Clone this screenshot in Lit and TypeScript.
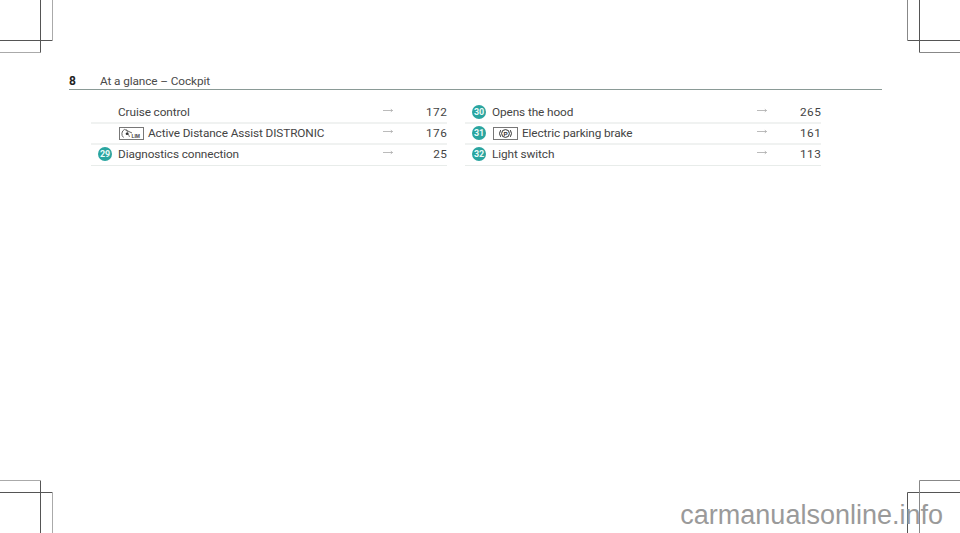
import { LitElement, html, css, svg } from "lit";
import { customElement } from "lit/decorators.js";

type Row = { badge?: string; icon?: "lim" | "park"; text: string; page: string };

const LEFT: Row[] = [
  { text: "Cruise control", page: "172" },
  { icon: "lim", text: "Active Distance Assist DISTRONIC", page: "176" },
  { badge: "29", text: "Diagnostics connection", page: "25" },
];
const RIGHT: Row[] = [
  { badge: "30", text: "Opens the hood", page: "265" },
  { badge: "31", icon: "park", text: "Electric parking brake", page: "161" },
  { badge: "32", text: "Light switch", page: "113" },
];

const LIM = svg`<svg class="ico" width="25" height="13" viewBox="0 0 25 13">
  <rect x="0.5" y="0.5" width="24" height="12" fill="#fff" stroke="#777"/>
  <path d="M4.5 10.5 A5 5 0 0 1 5.5 2.4 L13 6" fill="none" stroke="#555" stroke-width="0.9"/>
  <path d="M7.5 2.4 L10.5 10" fill="none" stroke="#666" stroke-width="0.8"/>
  <circle cx="8" cy="6.8" r="1.3" fill="#333"/>
  <text x="12.5" y="10.8" font-size="5" font-weight="700" fill="#444" font-family="Liberation Sans, sans-serif">LIM</text>
</svg>`;

const PARK = svg`<svg class="ico" width="25" height="13" viewBox="0 0 25 13">
  <rect x="0.5" y="0.5" width="24" height="12" fill="#fff" stroke="#777"/>
  <circle cx="12.5" cy="6.5" r="3.9" fill="none" stroke="#333" stroke-width="1"/>
  <path d="M7.6 3.2 A6 6 0 0 0 7.6 9.8 M17.4 3.2 A6 6 0 0 1 17.4 9.8" fill="none" stroke="#333" stroke-width="1"/>
  <text x="12.5" y="8.7" text-anchor="middle" font-size="6.2" font-weight="700" fill="#333" font-family="Liberation Sans, sans-serif">P</text>
</svg>`;

const ARROW = svg`<svg class="arrow" width="10" height="5" viewBox="0 0 10 5">
  <path d="M0 2.5H9.5M7.8 1.2L9.5 2.5L7.8 3.8" fill="none" stroke="#aaa" stroke-width="0.8"/>
</svg>`;

const MARKS = svg`<svg class="marks" width="960" height="533" viewBox="0 0 960 533">
  <g fill="none">
    <path stroke="#555" d="M40.5 0V52.5H0M0 40.5H52.5"/>
    <path stroke="#aaa" d="M52.5 0V40.5M40.5 52.5H0"/>
    <path stroke="#555" d="M919.5 0V52.5M907.5 40.5H960"/>
    <path stroke="#888" d="M907.5 0V40.5M919.5 52.5H960"/>
    <path stroke="#555" d="M40.5 480.5V533M0 492.5H52.5"/>
    <path stroke="#aaa" d="M0 480.5H40.5M52.5 492.5V533"/>
    <path stroke="#555" d="M907.5 492.5H960M907.5 492.5V533"/>
    <path stroke="#888" d="M919.5 480.5H960M919.5 480.5V533"/>
  </g>
</svg>`;

@customElement("app-root")
export class AppRoot extends LitElement {
  static styles = css`
    :host {
      display: block;
      position: relative;
      width: 960px;
      height: 533px;
      overflow: hidden;
      background: #fff;
      font-family: Roboto, "Liberation Sans", sans-serif;
      color: #333;
    }
    .page {
      padding: 73px 78px 0 69px;
      display: flex;
      flex-direction: column;
    }
    .head {
      display: flex;
      height: 15px;
      padding-bottom: 1px;
      align-items: center;
      border-bottom: 1px solid #8a9a96;
      font-size: 11.8px;
      letter-spacing: -0.1px;
      color: #4a4a4a;
    }
    .num {
      width: 31px;
      font-size: 12px;
      font-weight: 700;
      letter-spacing: 0;
      color: #222;
    }
    .cols {
      display: flex;
      gap: 18px;
      margin: 13px 0 0 22px;
    }
    .col {
      width: 356px;
    }
    .row {
      display: grid;
      grid-template-columns: 27px 265px 10px 1fr;
      align-items: center;
      height: 21px;
      padding-bottom: 2px;
      box-sizing: border-box;
      border-bottom: 2px solid #f0f2f1;
      font-size: 11.8px;
      letter-spacing: -0.1px;
      color: #444;
    }
    .row:last-child {
      border-bottom: 1px solid #e8ecea;
      padding-bottom: 3px;
    }
    .badge {
      width: 14px;
      height: 14px;
      margin-left: 7px;
      border-radius: 50%;
      background: #2aa5a0;
      color: #eafaf8;
      font-size: 9px;
      font-weight: 700;
      letter-spacing: -0.2px;
      line-height: 14px;
      text-align: center;
    }
    .text {
      display: flex;
      align-items: center;
      gap: 4px;
      white-space: nowrap;
    }
    .ico {
      flex: none;
      margin: 1px 0 0 1px;
    }
    .arrow {
      display: block;
      margin-bottom: 3px;
    }
    .pg {
      text-align: right;
      letter-spacing: 0.6px;
      margin-right: -0.6px;
    }
    .marks {
      position: absolute;
      inset: 0;
      pointer-events: none;
    }
    .wm {
      position: absolute;
      right: 17px;
      bottom: 3px;
      font-family: "Liberation Sans", sans-serif;
      font-size: 27px;
      color: #9a9a9a;
      line-height: 30px;
    }
  `;

  private renderRow(r: Row) {
    return html`<div class="row">
      <div>${r.badge ? html`<div class="badge">${r.badge}</div>` : ""}</div>
      <div class="text">
        ${r.icon === "lim" ? LIM : r.icon === "park" ? PARK : ""}<span>${r.text}</span>
      </div>
      ${ARROW}
      <div class="pg">${r.page}</div>
    </div>`;
  }

  render() {
    return html`<div class="page">
        <div class="head"><span class="num">8</span><span>At a glance – Cockpit</span></div>
        <div class="cols">
          <div class="col">${LEFT.map((r) => this.renderRow(r))}</div>
          <div class="col">${RIGHT.map((r) => this.renderRow(r))}</div>
        </div>
      </div>
      ${MARKS}
      <div class="wm">carmanualsonline.info</div>`;
  }
}
